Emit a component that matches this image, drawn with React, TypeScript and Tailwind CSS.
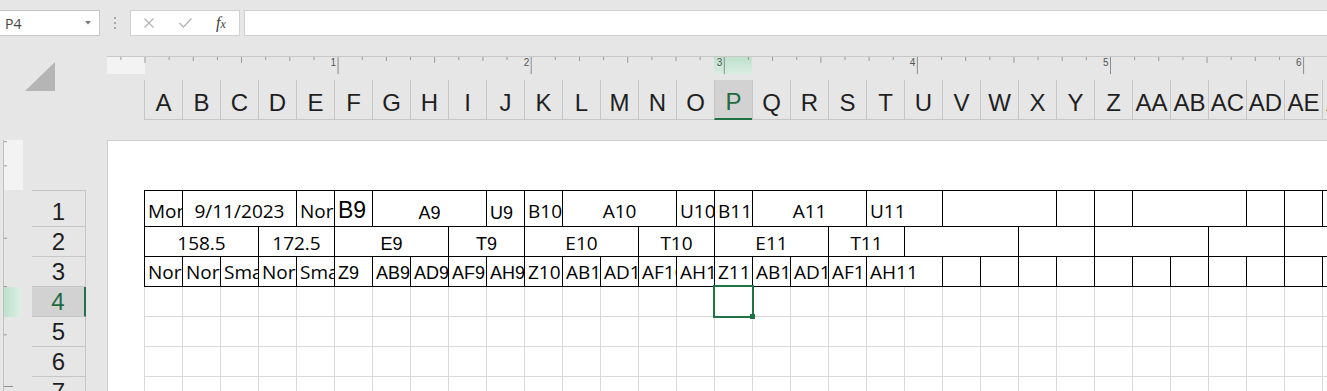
import React from "react";

const COLS = [
  "A", "B", "C", "D", "E", "F", "G", "H", "I", "J", "K", "L", "M", "N", "O", "P",
  "Q", "R", "S", "T", "U", "V", "W", "X", "Y", "Z", "AA", "AB", "AC", "AD", "AE", "AF",
];

const W: Record<number, string> = {
  1: "w-[38px]",
  2: "w-[76px]",
  3: "w-[114px]",
  4: "w-[152px]",
};

type Font = "o" | "a" | "b";
type Cell = { s: number; t?: string; c?: boolean; f?: Font };

const FONT: Record<Font, string> = {
  o: "font-['Open_Sans',sans-serif] text-[19px]",
  a: "font-['Liberation_Sans',Arial,sans-serif] text-[18px]",
  b: "font-['Liberation_Sans',Arial,sans-serif] text-[23px]",
};

const row1: Cell[] = [
  { s: 1, t: "Monday" },
  { s: 3, t: "9/11/2023", c: true },
  { s: 1, t: "Normal" },
  { s: 1, t: "B9", f: "b" },
  { s: 3, t: "A9", c: true, f: "a" },
  { s: 1, t: "U9", f: "a" },
  { s: 1, t: "B10" },
  { s: 3, t: "A10", c: true },
  { s: 1, t: "U10" },
  { s: 1, t: "B11" },
  { s: 3, t: "A11", c: true },
  { s: 2, t: "U11" },
  { s: 3 }, { s: 1 }, { s: 1 }, { s: 3 }, { s: 1 }, { s: 1 }, { s: 4 },
];

const row2: Cell[] = [
  { s: 3, t: "158.5", c: true },
  { s: 2, t: "172.5", c: true },
  { s: 3, t: "E9", c: true, f: "a" },
  { s: 2, t: "T9", c: true, f: "a" },
  { s: 3, t: "E10", c: true },
  { s: 2, t: "T10", c: true },
  { s: 3, t: "E11", c: true },
  { s: 2, t: "T11", c: true },
  { s: 3 }, { s: 2 }, { s: 3 }, { s: 2 }, { s: 4 },
];

const row3: Cell[] = [
  { s: 1, t: "Normal" },
  { s: 1, t: "Normal" },
  { s: 1, t: "Small" },
  { s: 1, t: "Normal" },
  { s: 1, t: "Small" },
  ...["Z9", "AB9", "AD9", "AF9", "AH9"].map((t): Cell => ({ s: 1, t, f: "a" })),
  ...["Z10", "AB10", "AD10", "AF10", "AH10", "Z11", "AB11", "AD11", "AF11"].map((t): Cell => ({ s: 1, t })),
  { s: 2, t: "AH11" },
  ...Array.from({ length: 10 }, (): Cell => ({ s: 1 })),
  { s: 4 },
];

const TableRow = ({
  cells,
  pad,
  h,
  top,
}: {
  cells: Cell[];
  pad: Partial<Record<Font, string>>;
  h: string;
  top?: boolean;
}) => (
  <div className={`flex shrink-0 border-b border-black ${h} ${top ? "border-t" : ""}`}>
    {cells.map((c, i) => (
      <div
        key={i}
        className={`flex shrink-0 items-end overflow-hidden border-l border-black ${W[c.s]} ${
          c.c ? "justify-center" : "pl-[3px]"
        }`}>
        {c.t && (
          <span className={`whitespace-nowrap leading-none text-black ${FONT[c.f ?? "o"]} ${pad[c.f ?? "o"]}`}>
            {c.t}
          </span>
        )}
      </div>
    ))}
  </div>
);

const INCH = 193.1;

const TopRuler = () => {
  const ticks = [];
  for (let j = -1; j <= 50; j++) {
    const x = 38 + (j * INCH) / 8;
    if (j > 0 && j % 8 === 0) {
      ticks.push(<line key={j} x1={x} x2={x} y1={0} y2={17} stroke="#8c8c8c" strokeWidth={1} />);
      ticks.push(
        <text key={"t" + j} x={x - 2} y={9} fontSize={10} textAnchor="end" fill="#555" fontFamily="Liberation Sans, Arial, sans-serif">
          {j / 8}
        </text>
      );
    } else {
      const len = j % 4 === 0 ? 6 : j % 2 === 0 ? 4 : 3;
      ticks.push(<line key={j} x1={x} x2={x} y1={0} y2={len} stroke="#9a9a9a" strokeWidth={1} />);
    }
  }
  return (
    <div className="relative flex h-[18px] shrink-0 border-t border-[#c8c8c8]">
      <div className="w-[38px] bg-[#f3f3f3]" />
      <div className="w-[569px]" />
      <div className="w-[38px] bg-linear-to-b from-[#bfe0cb] to-[#d9eee2]" />
      <svg className="absolute inset-0" width="1220" height="17">
        {ticks}
      </svg>
    </div>
  );
};

const SideRuler = () => {
  const ys = [-2, -1, 2, 4, 6];
  return (
    <div className="relative ml-[3px] w-[20px] border-l border-[#c0c0c0]">
      <div className="h-[50px] bg-[#f3f3f3]" />
      <div className="h-[97px]" />
      <div className="h-[30px] w-[17px] bg-linear-to-r from-[#bfe0cb] to-[#dcefe4]" />
      <svg className="absolute inset-0" width="19" height="251">
        {ys.map((j) => {
          const y = 50 + (j * INCH) / 8;
          return <line key={j} x1={0} x2={3} y1={y} y2={y} stroke="#9a9a9a" strokeWidth={1} />;
        })}
        <line x1={0} x2={9} y1={246.5} y2={246.5} stroke="#8c8c8c" strokeWidth={1} />
      </svg>
    </div>
  );
};

export default function App() {
  return (
    <div className="flex h-[391px] w-[1327px] flex-col overflow-hidden bg-[#e6e6e6] font-['Liberation_Sans',Arial,sans-serif]">
      {/* formula bar */}
      <div className="flex h-[46px] shrink-0 items-start pt-[10px]">
        <div className="flex h-[26px] w-[100px] items-center justify-between border-y border-r border-[#c8c8c8] bg-white pl-[5px] pr-[8px]">
          <span className="font-['Open_Sans',sans-serif] text-[14px] text-[#444]">P4</span>
          <svg width="6" height="4" viewBox="0 0 6 4">
            <path d="M0 0h6L3 3.5z" fill="#7a7a7a" />
          </svg>
        </div>
        <div className="flex h-[26px] w-[30px] flex-col items-center justify-center gap-[3px]">
          <span className="h-[2px] w-[2px] bg-[#a8a8a8]" />
          <span className="h-[2px] w-[2px] bg-[#a8a8a8]" />
          <span className="h-[2px] w-[2px] bg-[#a8a8a8]" />
        </div>
        <div className="flex h-[26px] w-[110px] items-center border border-[#d0d0d0] bg-white pl-[13px]">
          <svg width="10" height="10" viewBox="0 0 10 10">
            <path d="M0.5 0.5l9 9M9.5 0.5l-9 9" stroke="#b4b4b4" strokeWidth="1.3" />
          </svg>
          <svg className="ml-[25px]" width="13" height="10" viewBox="0 0 13 10">
            <path d="M0.5 5l4 4 8-8.5" stroke="#b4b4b4" strokeWidth="1.3" fill="none" />
          </svg>
          <span className="ml-[24px] font-['Liberation_Serif',serif] text-[16px] italic text-[#404040]">
            f<span className="text-[12px]">x</span>
          </span>
        </div>
        <div className="ml-[4px] h-[26px] flex-1 border-y border-l border-[#d0d0d0] bg-white" />
      </div>

      <div className="flex min-h-0 flex-1">
        {/* left strip */}
        <div className="flex w-[107px] shrink-0 flex-col">
          <div className="h-[94px] shrink-0 pl-[25px] pt-[16px]">
            <svg width="30" height="29" viewBox="0 0 30 29">
              <path d="M30 0v29H0z" fill="#b5b5b5" />
            </svg>
          </div>
          <div className="flex min-h-0 flex-1">
            <SideRuler />
            <div className="ml-[9px] flex flex-col pt-[50px] text-[24px] leading-none">
              {[1, 2, 3, 4, 5, 6, 7].map((r) => (
                <div
                  key={r}
                  className={`flex w-[54px] shrink-0 items-end justify-center border-b border-[#c6c6c6] pb-[2px] ${
                    r === 1 ? "h-[37px] border-t" : "h-[30px]"
                  } ${r === 4 ? "border-r-2 border-r-[#217346] bg-[#d2d2d2] text-[#1e6b42]" : "border-r text-[#1f1f1f]"}`}>
                  {r}
                </div>
              ))}
            </div>
          </div>
        </div>

        {/* sheet area */}
        <div className="flex min-w-0 flex-1 flex-col pt-[10px]">
          <TopRuler />
          <div className="h-[6px] shrink-0" />
          <div className="flex h-[40px] shrink-0 pl-[37px] text-[24px] leading-none">
            {COLS.map((c) => (
              <div
                key={c}
                className={`flex w-[38px] shrink-0 items-center justify-center overflow-hidden whitespace-nowrap border-l border-[#c6c6c6] pt-[6px] ${
                  c === "P" ? "border-b-2 border-b-[#217346] bg-[#d2d2d2] text-[#1e6b42]" : "border-b text-[#1f1f1f]"
                }`}>
                {c}
              </div>
            ))}
          </div>
          <div className="h-[20px] shrink-0" />
          <div className="flex min-h-0 flex-1 flex-col overflow-hidden border-l border-t border-[#d0d0d0] bg-white pl-[36px] pt-[49px]">
            <TableRow cells={row1} h="h-[37px]" top pad={{ o: "pb-[5px]", a: "pb-[4px]", b: "pb-[4px]" }} />
            <TableRow cells={row2} h="h-[30px]" pad={{ o: "pb-[3px]", a: "pb-[3px]" }} />
            <TableRow cells={row3} h="h-[30px]" pad={{ o: "pb-[4px]", a: "pb-[4px]" }} />
            {[4, 5, 6, 7].map((r) => (
              <div key={r} className="flex h-[30px] shrink-0 border-b border-[#d9d9d9]">
                {COLS.map((c) => (
                  <div
                    key={c}
                    className={`w-[38px] shrink-0 border-l border-[#d9d9d9] ${r === 4 && c === "P" ? "relative z-10" : ""}`}>
                    {r === 4 && c === "P" && (
                      <>
                        <div className="absolute -left-[2px] -top-[2px] h-[33px] w-[41px] border-2 border-[#217346]" />
                        <div className="absolute left-[35px] top-[27px] h-[5px] w-[5px] bg-[#217346]" />
                      </>
                    )}
                  </div>
                ))}
              </div>
            ))}
          </div>
        </div>
      </div>
    </div>
  );
}
